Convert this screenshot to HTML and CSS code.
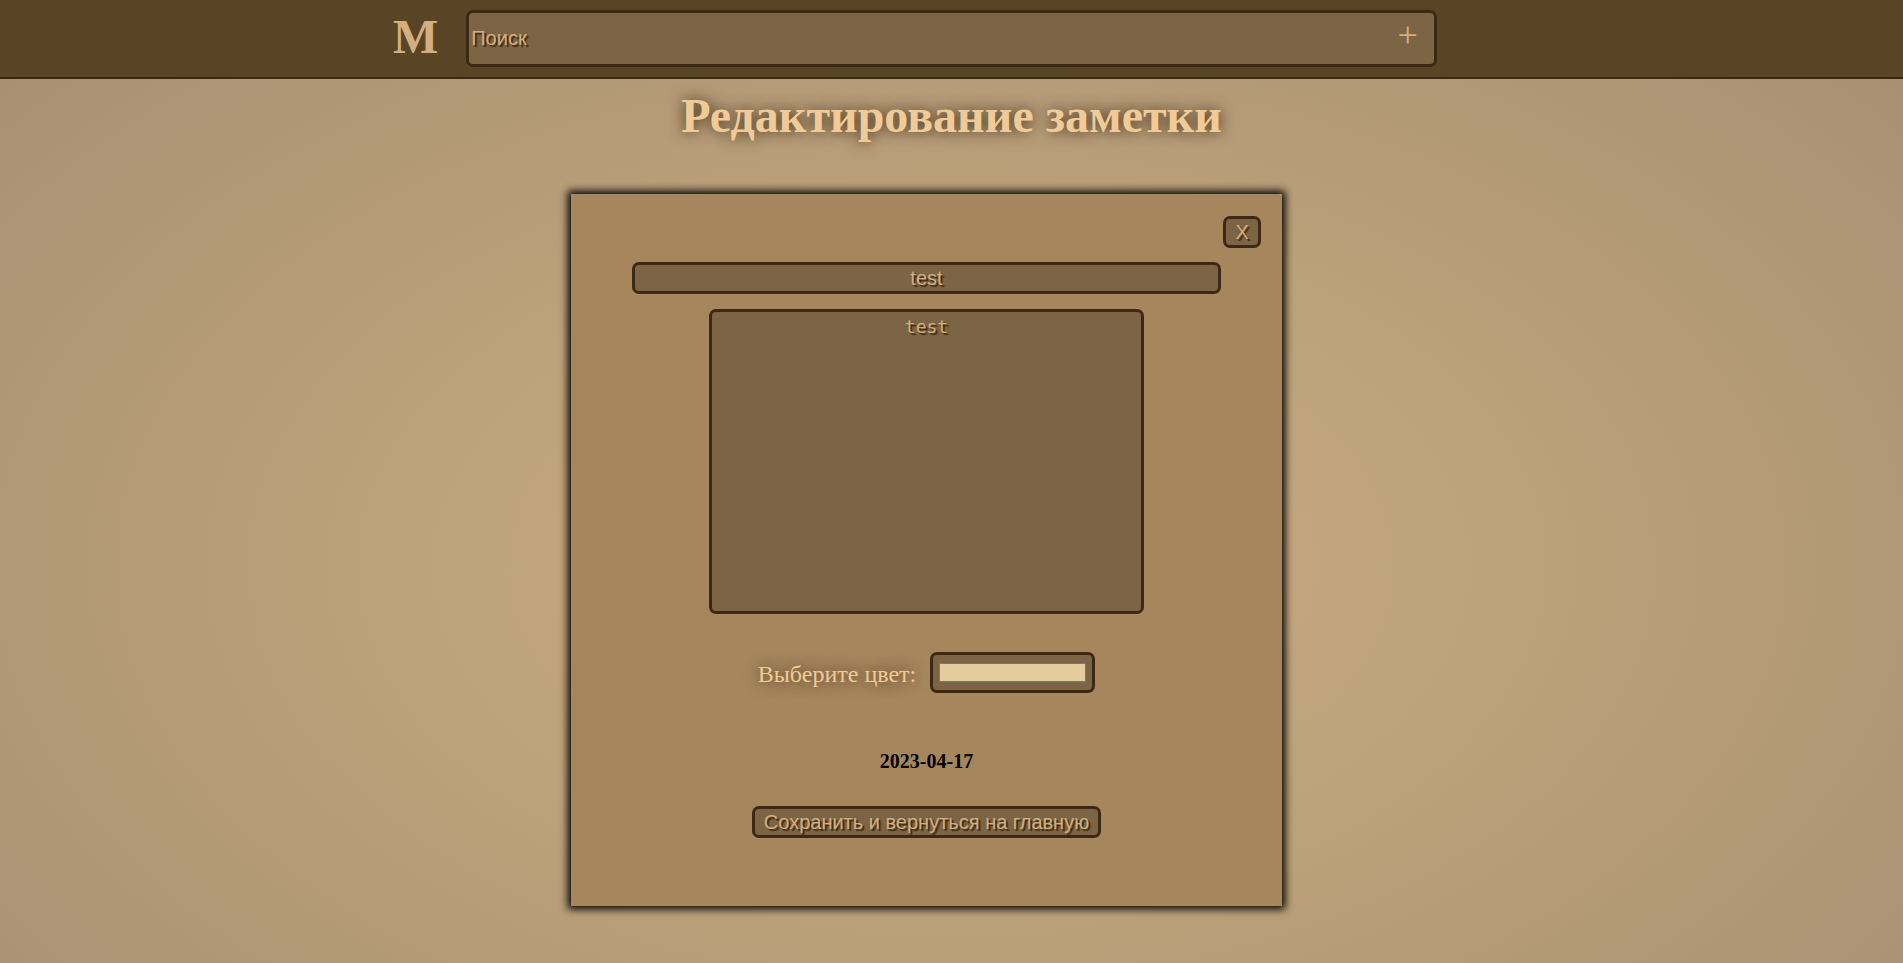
FILE: index.html
```html
<!DOCTYPE html>
<html lang="ru">
<head>
<meta charset="utf-8">
<title>Редактирование заметки</title>
<link rel="stylesheet" href="styles.css">
</head>
<body>
<header class="header">
  <a class="logo" href="#">M</a>
  <form class="search control">
    <input class="search-input" type="text" placeholder="Поиск" aria-label="Поиск">
    <button class="add" type="button" aria-label="Добавить заметку">+</button>
  </form>
</header>
<main class="main">
  <h1 class="title">Редактирование заметки</h1>
  <div class="holder">
    <form class="card">
      <button class="control btn close" type="button" aria-label="Закрыть">X</button>
      <input class="control note-title" type="text" value="test" aria-label="Заголовок">
      <textarea class="control note-text" aria-label="Текст заметки">test</textarea>
      <div class="color-row">
        <label class="color-label" for="color">Выберите цвет:</label>
        <input class="control color" id="color" type="color" value="#e4cc9e">
      </div>
      <time class="date" datetime="2023-04-17">2023-04-17</time>
      <button class="control btn" type="submit">Сохранить и вернуться на главную</button>
    </form>
  </div>
</main>
</body>
</html>
```
FILE: styles.css
```css
* {
  box-sizing: border-box;
}

body {
  margin: 0;
  min-height: 100vh;
  font-family: "Liberation Serif", "Times New Roman", serif;
  background: radial-gradient(1345px 800px at 50% 566px, #cdae80, #a58f72) no-repeat;
}

.control {
  border: 3px solid #3d2813;
  border-radius: 7px;
  background: #7c6545;
  color: #d2ae80;
  font-family: "Liberation Sans", Arial, sans-serif;
  font-size: 20px;
  text-shadow: 2px 2px 1px #3d2813;
}

.header {
  display: grid;
  grid-template-columns: 1fr 51% 1fr;
  column-gap: 28px;
  align-items: center;
  height: 79px;
  padding-bottom: 1px;
  border-bottom: 2px solid #3d2612;
  background: #5a4426;
}

.logo {
  justify-self: end;
  color: #d2ae80;
  font-size: 48px;
  font-weight: bold;
  line-height: 52px;
  padding-bottom: 2px;
  text-decoration: none;
}

.search {
  display: flex;
  height: 57px;
}

.search-input {
  flex: 1;
  min-width: 0;
  padding: 0 2px;
  border: 0;
  background: none;
  color: inherit;
  font: inherit;
  text-shadow: inherit;
}

.search-input::placeholder {
  color: inherit;
}

.add {
  padding: 0 16px 6px;
  border: 0;
  background: none;
  color: inherit;
  font-family: "Liberation Serif", "Times New Roman", serif;
  font-size: 36px;
  line-height: 40px;
}

.title {
  margin: 0;
  padding: 9px 0 10px;
  color: #f0cb98;
  font-size: 48px;
  line-height: 55px;
  text-align: center;
  text-shadow: 0 0 15px #3d2813;
}

.holder {
  padding: 41px 50px 55px 0;
}

.card {
  display: flex;
  flex-direction: column;
  align-items: center;
  width: 38.4%;
  margin: 0 auto;
  padding: 22px 21px 68px;
  background: #a6875d;
  box-shadow: 0 0 8px 3px #000;
}

.btn {
  height: 32px;
  padding: 0 9px;
}

.close {
  align-self: flex-end;
  min-width: 38px;
  margin-bottom: 14px;
}

.note-title {
  width: 88%;
  height: 32px;
  margin-bottom: 15px;
  text-align: center;
}

.note-text {
  width: 65%;
  height: 305px;
  margin-bottom: 38px;
  padding: 4px;
  font-family: "DejaVu Sans Mono", monospace;
  font-size: 18px;
  text-align: center;
  resize: none;
}

.color-row {
  display: flex;
  align-items: center;
  gap: 14px;
  margin-bottom: 57px;
}

.color-label {
  padding-top: 4px;
  color: #f0cb98;
  font-size: 24px;
  text-shadow: 0 0 15px #3d2813;
}

.color {
  width: 165px;
  height: 41px;
  padding: 4px;
}

.date {
  margin-bottom: 33px;
  font-size: 20px;
  font-weight: bold;
  line-height: 23px;
}
```
